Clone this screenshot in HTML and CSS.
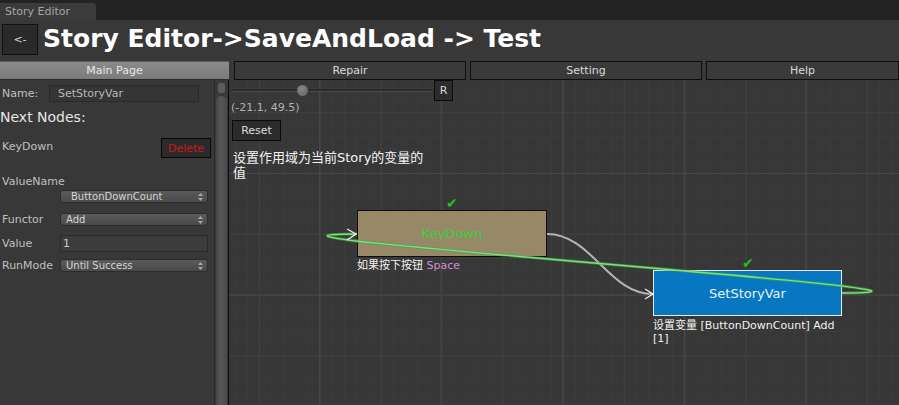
FILE: index.html
```html
<!DOCTYPE html>
<html>
<head>
<meta charset="utf-8">
<link rel="stylesheet" href="styles.css">
</head>
<body>
<div class="tabbar"><div class="tab">Story Editor</div></div>
<div class="titlebar">
  <button class="back">&lt;-</button>
  <h1 class="title">Story Editor-&gt;SaveAndLoad -&gt; Test</h1>
</div>
<div class="main">
  <div class="side-head">Main Page</div>
  <div class="toolbar">
    <button class="tbtn">Repair</button>
    <button class="tbtn">Setting</button>
    <button class="tbtn tbtn-last">Help</button>
  </div>
  <div class="side-body">
    <div class="side-content">
      <div class="row row-name"><span class="lbl lbl-name">Name:</span><div class="field field-name">SetStoryVar</div></div>
      <div class="next">Next Nodes:</div>
      <div class="row row-key"><span class="lbl lbl-key">KeyDown</span><button class="del">Delete</button></div>
      <div class="lbl lbl-vn">ValueName</div>
      <div class="row row-vn"><div class="drop">ButtonDownCount<svg class="arr" width="5" height="8" viewBox="0 0 5 8"><path d="M0 3 L2.5 0 L5 3Z M0 5 L2.5 8 L5 5Z" fill="#a8a8a8"/></svg></div></div>
      <div class="row row-fn"><span class="lbl lbl-col">Functor</span><div class="drop">Add<svg class="arr" width="5" height="8" viewBox="0 0 5 8"><path d="M0 3 L2.5 0 L5 3Z M0 5 L2.5 8 L5 5Z" fill="#a8a8a8"/></svg></div></div>
      <div class="row row-val"><span class="lbl lbl-col">Value</span><div class="field field-val">1</div></div>
      <div class="row row-rm"><span class="lbl lbl-col">RunMode</span><div class="drop">Until Success<svg class="arr" width="5" height="8" viewBox="0 0 5 8"><path d="M0 3 L2.5 0 L5 3Z M0 5 L2.5 8 L5 5Z" fill="#a8a8a8"/></svg></div></div>
    </div>
    <div class="scrollbar"><div class="sb-arrow"></div><div class="sb-thumb"></div></div>
  </div>
  <div class="canvas">
    <div class="slider-row">
      <div class="track"><div class="thumb"></div></div>
      <button class="rbtn">R</button>
    </div>
    <div class="coords">(-21.1, 49.5)</div>
    <button class="reset">Reset</button>
    <div class="desc">设置作用域为当前Story的变量的值</div>

    <div class="check check-1">✔</div>
    <div class="node node-key">KeyDown</div>
    <div class="cap cap-1">如果按下按钮 <span class="key">Space</span></div>

    <div class="check check-2">✔</div>
    <div class="node node-set">SetStoryVar</div>
    <div class="cap cap-2">设置变量 [ButtonDownCount] Add [1]</div>

    <svg class="wires" width="670" height="325" viewBox="0 0 670 325">
      <path d="M318 154 C363 154 379 214 424 214" fill="none" stroke="#b4b4b4" stroke-width="2"/>
      <path d="M613 213 C813 213 -72 154 128 154" fill="none" stroke="#3fa83f" stroke-width="3" opacity="0.6"/>
      <path d="M613 213 C813 213 -72 154 128 154" fill="none" stroke="#7ee07e" stroke-width="1.3"/>
      <polyline points="118,149 127,154 118,160" fill="none" stroke="#f0f0f0" stroke-width="1.3"/>
      <polyline points="416,209 424,214 416,219" fill="none" stroke="#f0f0f0" stroke-width="1.3"/>
    </svg>
  </div>
</div>
</body>
</html>
```
FILE: styles.css
```css
* { box-sizing: border-box; }
html, body { margin: 0; padding: 0; }
body {
  width: 899px;
  height: 405px;
  overflow: hidden;
  background: #383838;
  font-family: "DejaVu Sans", "Noto Sans CJK SC", sans-serif;
  font-size: 11px;
  color: #c2c2c2;
}
button { font-family: inherit; font-size: 11px; padding: 0; margin: 0; cursor: default; }

.tabbar { height: 20px; background: #232323; padding-top: 3px; }
.tab {
  width: 96px; height: 17px;
  background: #3b3b3b;
  border-top-right-radius: 3px;
  color: #a6a6a6;
  padding-left: 5px;
  line-height: 17px;
}

.titlebar { height: 39px; display: flex; align-items: center; padding-left: 2px; padding-bottom: 2px; }
.back {
  width: 36px; height: 31px;
  margin-top: 2px;
  background: #2a2a2a;
  border: 1px solid #111;
  color: #d8d8d8;
  font-size: 11px;
}
.title {
  margin: 0 0 0 5px;
  font-family: "DejaVu Sans", sans-serif;
  font-weight: bold;
  font-size: 25px;
  color: #ffffff;
  line-height: 30px;
}

.main {
  display: grid;
  grid-template-columns: 229px 1fr;
  grid-template-rows: 19px 1fr;
  padding-top: 2px;
  height: 346px;
}
.side-head {
  background: linear-gradient(#8a8a8a, #7b7b7b);
  border-top: 1px solid #5a5a5a;
  border-bottom: 1px solid #2a2a2a;
  color: #e8e8e8;
  text-align: center;
  line-height: 17px;
}
.toolbar { display: flex; gap: 4px; padding-left: 5px; }
.tbtn {
  flex: 0 0 232px;
  height: 19px;
  background: #3a3a3a;
  border: 1px solid #0e0e0e;
  color: #dadada;
}
.tbtn-last { flex: 1 1 auto; }

.side-body { display: flex; }
.side-content { flex: 1; }
.row { display: flex; align-items: center; }
.lbl { color: #c0c0c0; line-height: 13px; padding-left: 2px; }
.row-name { margin-top: 5px; height: 17px; }
.lbl-name { width: 49px; }
.field {
  background: #353535;
  border: 1px solid #2a2a2a;
  color: #b8b8b8;
  height: 17px;
  line-height: 15px;
  padding-left: 8px;
}
.field-name { width: 150px; }
.next { margin-top: 6px; font-size: 14px; line-height: 18px; color: #e6e6e6; }
.row-key { margin-top: 12px; height: 20px; justify-content: space-between; }
.lbl-key { padding-bottom: 4px; }
.del {
  width: 50px; height: 20px;
  background: #2b2b2b;
  border: 1px solid #080808;
  color: #d0151a;
  margin-right: 3px;
}
.lbl-vn { margin-top: 17px; }
.row-vn { margin-top: 2px; padding-left: 60px; }
.drop {
  position: relative;
  width: 148px;
  height: 13px;
  background: linear-gradient(#5a5a5a, #4a4a4a);
  border: 1px solid #2c2c2c;
  border-radius: 3px;
  color: #d4d4d4;
  font-size: 10px;
  line-height: 11px;
  padding-left: 5px;
}
.row-vn .drop { padding-left: 10px; }
.arr { position: absolute; right: 4px; top: 2px; }
.lbl-col { width: 60px; }
.row-fn { margin-top: 10px; }
.row-val { margin-top: 9px; }
.field-val { width: 148px; background: #3c3c3c; color: #c8c8c8; padding-left: 2px; }
.row-rm { margin-top: 7px; }

.scrollbar {
  width: 15px;
  background: #3a3a3a;
  border-left: 1px solid #2a2a2a;
  border-right: 1px solid #0a0a0a;
  padding: 3px 1px 0 1px;
}
.sb-arrow { height: 10px; margin: 0 2px; border-radius: 2px; background: #5c5c5c; }
.sb-thumb {
  margin-top: 3px;
  height: 320px;
  border-radius: 6px 6px 0 0;
  background: linear-gradient(to right, #464646, #575757 40%, #4a4a4a);
}

.canvas {
  position: relative;
  overflow: hidden;
  background-color: #373737;
  background-image:
    linear-gradient(to right, #474747 1px, transparent 1px),
    linear-gradient(to bottom, #474747 1px, transparent 1px),
    linear-gradient(to right, #414141 1px, transparent 1px),
    linear-gradient(to bottom, #414141 1px, transparent 1px),
    linear-gradient(to right, #3b3b3b 1px, transparent 1px),
    linear-gradient(to bottom, #3b3b3b 1px, transparent 1px);
  background-size:
    121.6px 100%, 100% 121.6px,
    60.8px 100%, 100% 60.8px,
    12.16px 100%, 100% 12.16px;
  background-position:
    90px 0, 0 93px,
    30px 0, 0 32.2px,
    5.7px 0, 0 7.9px;
  padding-left: 2px;
}
.wires { position: absolute; left: 0; top: 0; pointer-events: none; }
.slider-row { position: relative; display: flex; align-items: center; height: 21px; }
.track { position: relative; width: 201px; height: 3px; background: #2c2c2c; border-bottom: 1px solid #4a4a4a; }
.thumb {
  position: absolute; left: 66px; top: -4px;
  width: 11px; height: 11px; border-radius: 50%;
  background: radial-gradient(circle at 40% 35%, #8a8a8a, #5e5e5e);
}
.rbtn {
  margin-left: 2px;
  width: 19px; height: 21px;
  background: #2c2c2c;
  border: 1px solid #0a0a0a;
  color: #d8d8d8;
}
.coords { position: relative; line-height: 13px; color: #b2b2b2; }
.reset {
  position: relative;
  display: block;
  margin-top: 6px; margin-left: 1px;
  width: 49px; height: 21px;
  background: #2b2b2b;
  border: 1px solid #0a0a0a;
  color: #dedede;
}
.desc {
  position: relative;
  margin-top: 9px; margin-left: 2px;
  width: 200px;
  font-size: 13px; line-height: 15px;
  color: #f4f4f4;
}

.node {
  position: absolute;
  display: flex; align-items: center; justify-content: center;
  font-size: 13px;
}
.node-key {
  left: 128px; top: 130px; width: 190px; height: 47px;
  background: #978868;
  border: 1px solid #0c0c0c;
  color: #3bd03b;
}
.node-set {
  left: 424px; top: 190px; width: 189px; height: 46px;
  background: #0877c1;
  border: 1px solid #e8e8e8;
  color: #e6f2fb;
}
.check { position: absolute; color: #22c022; font-size: 14px; line-height: 14px; }
.check-1 { left: 217px; top: 116px; }
.check-2 { left: 513px; top: 176px; }
.cap { position: absolute; font-size: 11px; line-height: 13px; color: #f2f2f2; width: 195px; }
.cap-1 { left: 128px; top: 179px; }
.cap-2 { left: 424px; top: 239px; }
.key { color: #d58ad9; }
```
